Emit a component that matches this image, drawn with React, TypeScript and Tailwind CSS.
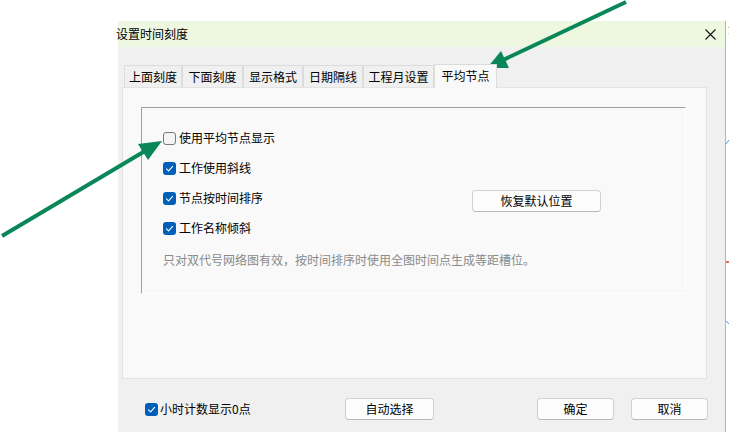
import React from 'react';

const font = { fontFamily: '"Noto Sans CJK SC", "Noto Sans", sans-serif' };

const Check: React.FC<{ checked?: boolean }> = ({ checked }) =>
  checked ? (
    <span className="w-[13px] h-[13px] rounded-[3px] bg-[#005FB8] flex items-center justify-center shrink-0">
      <svg width="9" height="9" viewBox="0 0 9 9" fill="none">
        <path d="M1.5 4.8L3.6 6.8L7.6 2.4" stroke="#fff" strokeWidth="1.1" strokeLinecap="round" strokeLinejoin="round" />
      </svg>
    </span>
  ) : (
    <span className="w-[13px] h-[13px] rounded-[3px] border border-[#7a7a7a] bg-[#f4f4f4] shrink-0"></span>
  );

const Btn: React.FC<{ label: string; w: string }> = ({ label, w }) => (
  <button className={`${w} h-[22px] rounded-[4px] bg-[#fdfdfd] border border-[#d0d0d0] border-b-[#b8b8b8] text-[12px] text-black flex items-center justify-center`}>
    {label}
  </button>
);

const tabs = [
  { label: '上面刻度', w: 'w-[58px]' },
  { label: '下面刻度', w: 'w-[61px]' },
  { label: '显示格式', w: 'w-[60px]' },
  { label: '日期隔线', w: 'w-[60px]' },
  { label: '工程月设置', w: 'w-[71px]' },
];

export default function App() {
  return (
    <div className="relative w-[729px] h-[432px] bg-white overflow-hidden flex text-[12px] text-black leading-none" style={font}>
      <div className="w-[118px] shrink-0"></div>

      {/* dialog */}
      <div className="w-[607px] shrink-0 flex flex-col pt-[21px]">
        <div className="h-[26px] bg-[#EEF7E0] flex items-center justify-between">
          <span className="-ml-[2px] text-[12px]">设置时间刻度</span>
          <svg width="11" height="11" viewBox="0 0 11 11" className="mr-[9px]">
            <path d="M0.5 0.5L10.5 10.5M10.5 0.5L0.5 10.5" stroke="#111" strokeWidth="1.1" />
          </svg>
        </div>

        <div className="flex-1 bg-[#F0F0F0] flex flex-col pt-[17px]">
          {/* tabs */}
          <div className="flex items-end ml-[6px] h-[24px] relative z-10 -mb-px">
            {tabs.map((t) => (
              <div key={t.label} className={`${t.w} h-[23px] bg-[#F0F0F0] border border-[#dcdcdc] border-b-[#e3e3e3] flex items-center justify-center`}>
                {t.label}
              </div>
            ))}
            <div className="w-[63px] h-[24px] bg-[#F9F9F9] border border-[#dcdcdc] border-b-0 flex items-center justify-center pb-[2px]">
              平均节点
            </div>
          </div>

          {/* panel */}
          <div className="ml-[4px] w-[585px] h-[292px] bg-[#F9F9F9] border border-[#e3e3e3] pt-[19px] pl-[18px]">
            <div className="w-[545px] h-[187px] border-t border-l border-t-[#a0a0a0] border-l-[#a0a0a0] border-r border-b border-r-white border-b-white pt-[15px] pl-[21px] flex flex-col">
              <div className="h-[30px] flex items-center gap-[3px]">
                <Check />
                <span>使用平均节点显示</span>
              </div>
              <div className="h-[30px] flex items-center gap-[3px]">
                <Check checked />
                <span>工作使用斜线</span>
              </div>
              <div className="h-[30px] flex items-center">
                <div className="w-[309px] flex items-center gap-[3px]">
                  <Check checked />
                  <span>节点按时间排序</span>
                </div>
                <div className="mt-[6px]">
                  <Btn label="恢复默认位置" w="w-[129px]" />
                </div>
              </div>
              <div className="h-[30px] flex items-center gap-[3px]">
                <Check checked />
                <span>工作名称倾斜</span>
              </div>
              <div className="mt-[8px] h-[18px] flex items-center text-[#8a8a8a]">
                只对双代号网络图有效，按时间排序时使用全图时间点生成等距槽位。
              </div>
            </div>
          </div>

          {/* bottom row */}
          <div className="mt-[19px] h-[22px] flex items-center pl-[27px]">
            <div className="w-[200px] flex items-center gap-[2px]">
              <Check checked />
              <span>小时计数显示0点</span>
            </div>
            <Btn label="自动选择" w="w-[89px]" />
            <div className="w-[103px]"></div>
            <Btn label="确定" w="w-[77px]" />
            <div className="w-[17px]"></div>
            <Btn label="取消" w="w-[77px]" />
          </div>
        </div>
      </div>

      {/* background app edge */}
      <div className="flex-1 flex flex-col">
        <div className="h-[21px]"></div>
        <div className="flex-1 border-l border-[#b4b4b4] relative">
          <span className="absolute left-[1px] top-[3px] text-[12px] text-[#7a3a1a]" style={{ fontFamily: '"Liberation Serif", serif' }}>1</span>
          <svg width="3" height="411" className="absolute left-0 top-0">
            <path d="M0 123L3 119" stroke="#5b8fd6" strokeWidth="1" />
            <path d="M0 241H3" stroke="#d04040" strokeWidth="1.5" />
            <path d="M0 300L3 303" stroke="#5b8fd6" strokeWidth="1" />
          </svg>
        </div>
      </div>

      {/* annotation arrows */}
      <svg className="absolute inset-0 pointer-events-none" width="729" height="432" viewBox="0 0 729 432">
        <line x1="626" y1="2" x2="503" y2="60" stroke="#0A8758" strokeWidth="4" />
        <polygon points="487,68 501,51 509,68" fill="#0A8758" />
        <line x1="2" y1="236" x2="145" y2="151" stroke="#0A8758" strokeWidth="4" />
        <polygon points="162,141 138,144 148,160" fill="#0A8758" />
      </svg>
    </div>
  );
}
